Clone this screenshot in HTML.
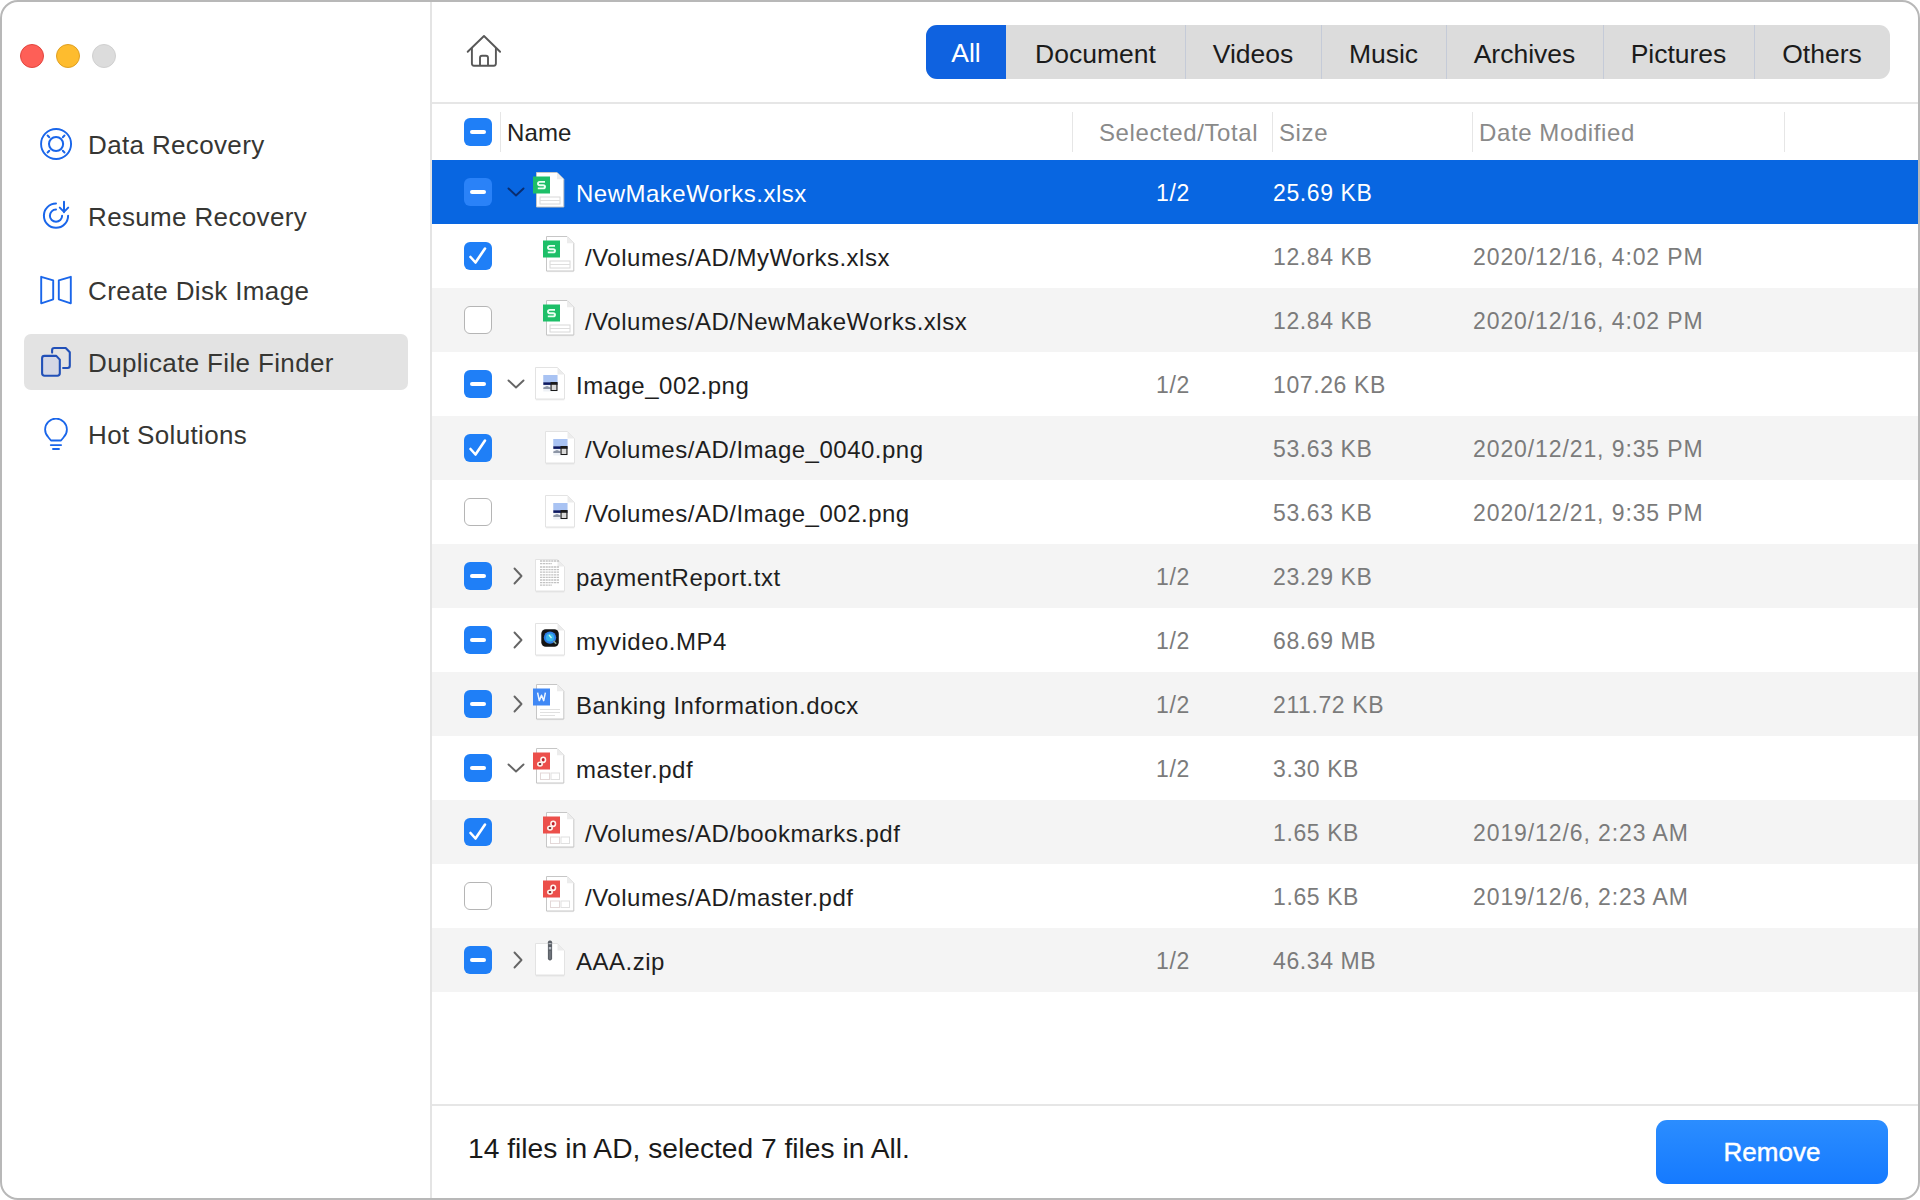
<!DOCTYPE html><html><head><meta charset="utf-8"><style>
*{box-sizing:border-box;margin:0;padding:0}
html,body{width:1920px;height:1200px;overflow:hidden;background:#fff;font-family:"Liberation Sans",sans-serif}
.win{position:absolute;left:0;top:0;width:1920px;height:1200px;border-radius:18px;overflow:hidden;background:#fff}
.frame{position:absolute;left:0;top:0;width:1920px;height:1200px;border:2px solid #b8b8b8;border-radius:18px;pointer-events:none}
.abs{position:absolute}
.tl{position:absolute;width:24px;height:24px;border-radius:50%;top:44px}
.side{position:absolute;left:0;top:0;width:432px;height:1200px;border-right:2px solid #e4e4e4}
.nav{position:absolute;left:24px;width:384px;height:56px;border-radius:7px}
.nav.sel{background:#e3e3e3}
.nav svg{position:absolute;left:14px;top:12px}
.nav span{position:absolute;left:64px;top:1px;line-height:56px;font-size:26px;letter-spacing:0.35px;color:#363633;white-space:nowrap}
.seg{position:absolute;left:926px;top:25px;width:964px;height:54px;border-radius:11px;background:#dcdcdc;overflow:hidden}
.sg{position:absolute;top:1.5px;height:54px;line-height:54px;text-align:center;font-size:26.5px;color:#1b1b1b;white-space:nowrap}
.sg.on{background:#0f62e0;color:#fff;top:0;line-height:57px}
.sd{position:absolute;top:0;width:1px;height:54px;background:#c5cbd8}
.hline{position:absolute;left:432px;width:1486px;height:2px;background:#e6e6e6}
.hdr{position:absolute;top:104px;height:56px;line-height:58px;font-size:24px;letter-spacing:0.6px;color:#8a8a8a;white-space:nowrap}
.cdiv{position:absolute;top:112px;width:1px;height:40px;background:#e6e6e6}
.row{position:absolute;left:432px;width:1486px;height:64px}
.row.g{background:#f4f4f4}
.row.s{background:#0866e1}
.t{position:absolute;top:0;line-height:67.5px;font-size:24px;letter-spacing:0.5px;white-space:nowrap;color:#1e1e1e}
.num{position:absolute;top:0;line-height:67.5px;font-size:23px;letter-spacing:0.6px;white-space:nowrap;color:#7b7b7b}
.cb{position:absolute;left:32px;top:18px;width:28px;height:28px;border-radius:6px;background:#1f7ff7}
.cb.e{background:#fff;border:1.5px solid #b5b5b5}
.cb.minus::after{content:"";position:absolute;left:6px;top:12px;width:16px;height:4px;border-radius:2px;background:#fff}
.row.s .cb{background:#2a82f8}
.foot{position:absolute;left:468px;top:1128px;line-height:40px;font-size:28.2px;color:#1a1a1a;white-space:nowrap}
.btn{position:absolute;left:1656px;top:1120px;width:232px;height:64px;border-radius:11px;background:linear-gradient(#2b8dff,#157aff);color:#fff;font-size:26px;text-align:center;line-height:64px;-webkit-text-stroke:0.45px #fff}
</style></head><body><div class="win">
<div class="side">
<div class="tl" style="left:20px;background:#fe5f57;border:0.5px solid #e2463f"></div><div class="tl" style="left:56px;background:#febc2e;border:0.5px solid #dfa023"></div><div class="tl" style="left:92px;background:#dcdcdc;border:0.5px solid #d0d0d0"></div>
<div class="nav" style="top:116px"><svg width="36" height="36" viewBox="0 0 36 36"><circle cx="18.07" cy="16" r="15" fill="none" stroke="#1a66ea" stroke-width="1.9"/><circle cx="18.07" cy="16" r="7.07" fill="none" stroke="#1a66ea" stroke-width="2"/><path d="M9.6 7.5 L11.3 9.2 M26.5 7.5 L24.8 9.2 M9.6 24.5 L11.3 22.8 M26.5 24.5 L24.8 22.8" stroke="#1a66ea" stroke-width="2" stroke-linecap="round"/></svg><span>Data Recovery</span></div>
<div class="nav" style="top:188px"><svg width="36" height="36" viewBox="0 0 36 36"><path d="M18 3.6 A12.1 12.1 0 1 0 30.1 15.7" fill="none" stroke="#1a66ea" stroke-width="2" stroke-linecap="round"/><path d="M18 9.6 A6.1 6.1 0 1 0 24.1 15.7" fill="none" stroke="#1a66ea" stroke-width="2" stroke-linecap="round"/><path d="M26 1.7 V12.2 M21.8 7.6 L26 11.9 L30.2 7.6" fill="none" stroke="#1a66ea" stroke-width="2" stroke-linecap="round" stroke-linejoin="round"/></svg><span>Resume Recovery</span></div>
<div class="nav" style="top:262px"><svg width="36" height="36" viewBox="0 0 36 36"><path d="M3.2 2.8 L15.2 6.3 V25.3 L3.2 29.3 Z" fill="none" stroke="#1a66ea" stroke-width="1.9" stroke-linejoin="round"/><path d="M32.8 2.8 L20.8 6.3 V25.3 L32.8 29.3 Z" fill="none" stroke="#1a66ea" stroke-width="1.9" stroke-linejoin="round"/></svg><span>Create Disk Image</span></div>
<div class="nav sel" style="top:334px"><svg width="36" height="36" viewBox="0 0 36 36"><path d="M14.1 6.6 V4.2 Q14.1 2 16.3 2 H27.7 L31.8 6.3 V19.8 Q31.8 22 29.6 22 H25.1" fill="none" stroke="#2150b8" stroke-width="2.1" stroke-linejoin="round" stroke-linecap="round"/><path d="M4.1 12.3 Q4.1 9.9 6.5 9.9 H18.3 L21.8 13.6 V27.3 Q21.8 29.7 19.4 29.7 H6.5 Q4.1 29.7 4.1 27.3 Z" fill="#d4d7e5" stroke="#2150b8" stroke-width="2.1" stroke-linejoin="round"/></svg><span>Duplicate File Finder</span></div>
<div class="nav" style="top:406px"><svg width="36" height="36" viewBox="0 0 36 36"><path d="M10.3 19.2 A10.9 10.9 0 1 1 25.7 19.2 L23 22.5 H13 Z" fill="none" stroke="#1a66ea" stroke-width="1.8" stroke-linejoin="round"/><path d="M12.8 27.1 H23.1 M15 31 H21" stroke="#1a66ea" stroke-width="1.9" stroke-linecap="round"/></svg><span>Hot Solutions</span></div>
</div>
<svg class="abs" style="left:462px;top:30px" width="44" height="44" viewBox="0 0 44 44"><path d="M5.7 21.8 L22 6 L38.1 21.8" fill="none" stroke="#585858" stroke-width="1.9" stroke-linecap="round" stroke-linejoin="round"/><path d="M9.9 18 V33.6 Q9.9 35.75 12 35.75 H31.8 Q33.9 35.75 33.9 33.6 V18" fill="none" stroke="#585858" stroke-width="1.9" stroke-linejoin="round"/><path d="M18 35.75 V27.8 Q18 25.7 20 25.7 H24 Q26 25.7 26 27.8 V35.75" fill="none" stroke="#585858" stroke-width="1.9"/></svg>
<div class="seg">
<div class="sg on" style="left:0px;width:80px">All</div>
<div class="sg" style="left:80px;width:179px">Document</div>
<div class="sg" style="left:259px;width:136px">Videos</div>
<div class="sd" style="left:259px"></div>
<div class="sg" style="left:395px;width:125px">Music</div>
<div class="sd" style="left:395px"></div>
<div class="sg" style="left:520px;width:157px">Archives</div>
<div class="sd" style="left:520px"></div>
<div class="sg" style="left:677px;width:151px">Pictures</div>
<div class="sd" style="left:677px"></div>
<div class="sg" style="left:828px;width:136px">Others</div>
<div class="sd" style="left:828px"></div>
</div>
<div class="hline" style="top:102px"></div>
<div class="cb minus" style="left:464px;top:118px"></div>
<div class="cdiv" style="left:500px"></div><div class="cdiv" style="left:1072px"></div><div class="cdiv" style="left:1272px"></div><div class="cdiv" style="left:1472px"></div><div class="cdiv" style="left:1784px"></div>
<div class="hdr" style="left:507px;color:#222;letter-spacing:0.1px">Name</div><div class="hdr" style="left:1099px">Selected/Total</div><div class="hdr" style="left:1279px">Size</div><div class="hdr" style="left:1479px">Date Modified</div>
<div class="row s" style="top:160px"><div class="cb minus"></div><svg class="abs" style="left:74px;top:24px" width="20" height="16" viewBox="0 0 20 16"><path d="M2.5 4.5 L10 11.5 L17.5 4.5" fill="none" stroke="#0a2c6e" stroke-width="1.9" stroke-linecap="round" stroke-linejoin="round"/></svg><svg class="abs" style="left:101px;top:12px" width="40" height="44" viewBox="0 0 40 44" overflow="visible"><rect x="3.6" y="35" width="27" height="1.2" fill="#000" opacity="0.06"/><path d="M3.5 0.5 H24 L30.8 7.3 V35 H3.5 Z" fill="#fff" stroke="#c6c6c6" stroke-width="1"/><path d="M24 0.5 L30.8 7.3 H24 Z" fill="#ececec"/><rect x="7" y="25" width="20" height="7" fill="none" stroke="#d8d8d8" stroke-width="1"/><line x1="7" y1="28.5" x2="27" y2="28.5" stroke="#dedede"/><rect x="0" y="4.5" width="17" height="17" fill="#1dbf68"/><path d="M12 9.9 H6.8 Q5 9.9 5 11.55 Q5 13.2 6.8 13.2 H10.2 Q12 13.2 12 14.8 Q12 16.4 10.2 16.4 H4.8" fill="none" stroke="#eafff2" stroke-width="1.9"/></svg><div class="t" style="left:144px;color:#fff">NewMakeWorks.xlsx</div><div class="num" style="left:641px;width:200px;text-align:center;color:#fff">1/2</div><div class="num" style="left:841px;color:#fff">25.69 KB</div></div>
<div class="row" style="top:224px"><div class="cb"><svg class="abs" style="left:0;top:0" width="28" height="28" viewBox="0 0 28 28"><path d="M6.5 15 L11.5 20.5 L21 6.5" fill="none" stroke="#fff" stroke-width="2.6" stroke-linecap="round" stroke-linejoin="round"/></svg></div><svg class="abs" style="left:111px;top:12px" width="40" height="44" viewBox="0 0 40 44" overflow="visible"><rect x="3.6" y="35" width="27" height="1.2" fill="#000" opacity="0.06"/><path d="M3.5 0.5 H24 L30.8 7.3 V35 H3.5 Z" fill="#fff" stroke="#c6c6c6" stroke-width="1"/><path d="M24 0.5 L30.8 7.3 H24 Z" fill="#ececec"/><rect x="7" y="25" width="20" height="7" fill="none" stroke="#d8d8d8" stroke-width="1"/><line x1="7" y1="28.5" x2="27" y2="28.5" stroke="#dedede"/><rect x="0" y="4.5" width="17" height="17" fill="#1dbf68"/><path d="M12 9.9 H6.8 Q5 9.9 5 11.55 Q5 13.2 6.8 13.2 H10.2 Q12 13.2 12 14.8 Q12 16.4 10.2 16.4 H4.8" fill="none" stroke="#eafff2" stroke-width="1.9"/></svg><div class="t" style="left:153px;color:#1e1e1e">/Volumes/AD/MyWorks.xlsx</div><div class="num" style="left:841px;color:#7b7b7b">12.84 KB</div><div class="num" style="left:1041px;color:#7b7b7b;letter-spacing:0.9px">2020/12/16, 4:02 PM</div></div>
<div class="row g" style="top:288px"><div class="cb e"></div><svg class="abs" style="left:111px;top:12px" width="40" height="44" viewBox="0 0 40 44" overflow="visible"><rect x="3.6" y="35" width="27" height="1.2" fill="#000" opacity="0.06"/><path d="M3.5 0.5 H24 L30.8 7.3 V35 H3.5 Z" fill="#fff" stroke="#c6c6c6" stroke-width="1"/><path d="M24 0.5 L30.8 7.3 H24 Z" fill="#ececec"/><rect x="7" y="25" width="20" height="7" fill="none" stroke="#d8d8d8" stroke-width="1"/><line x1="7" y1="28.5" x2="27" y2="28.5" stroke="#dedede"/><rect x="0" y="4.5" width="17" height="17" fill="#1dbf68"/><path d="M12 9.9 H6.8 Q5 9.9 5 11.55 Q5 13.2 6.8 13.2 H10.2 Q12 13.2 12 14.8 Q12 16.4 10.2 16.4 H4.8" fill="none" stroke="#eafff2" stroke-width="1.9"/></svg><div class="t" style="left:153px;color:#1e1e1e">/Volumes/AD/NewMakeWorks.xlsx</div><div class="num" style="left:841px;color:#7b7b7b">12.84 KB</div><div class="num" style="left:1041px;color:#7b7b7b;letter-spacing:0.9px">2020/12/16, 4:02 PM</div></div>
<div class="row" style="top:352px"><div class="cb minus"></div><svg class="abs" style="left:74px;top:24px" width="20" height="16" viewBox="0 0 20 16"><path d="M2.5 4.5 L10 11.5 L17.5 4.5" fill="none" stroke="#656565" stroke-width="1.9" stroke-linecap="round" stroke-linejoin="round"/></svg><svg class="abs" style="left:101px;top:12px" width="40" height="44" viewBox="0 0 40 44" overflow="visible"><rect x="2.8" y="35" width="28.5" height="1.4" fill="#000" opacity="0.07"/><path d="M2.5 3.5 H24.5 L31.5 10.5 V35 H2.5 Z" fill="#fff" stroke="#e3e3e3" stroke-width="1"/><path d="M24.5 3.5 V10.5 H31.5 Z" fill="#ececec"/><rect x="10.3" y="11" width="14.2" height="16.5" fill="#eef1f6"/><rect x="10.3" y="11" width="14.2" height="7.5" fill="#a9c3f3"/><rect x="10.3" y="18.3" width="14.2" height="2.6" fill="#0d1a62"/><path d="M10.3 23.5 L14 22 L17.5 23.5 V25 H10.3 Z" fill="#8d96a6"/><rect x="17.5" y="18" width="7" height="9" fill="#1a1a1a"/><rect x="18.6" y="20.8" width="4.8" height="5.2" fill="#d9d9d9"/></svg><div class="t" style="left:144px;color:#1e1e1e">Image_002.png</div><div class="num" style="left:641px;width:200px;text-align:center;color:#7b7b7b">1/2</div><div class="num" style="left:841px;color:#7b7b7b">107.26 KB</div></div>
<div class="row g" style="top:416px"><div class="cb"><svg class="abs" style="left:0;top:0" width="28" height="28" viewBox="0 0 28 28"><path d="M6.5 15 L11.5 20.5 L21 6.5" fill="none" stroke="#fff" stroke-width="2.6" stroke-linecap="round" stroke-linejoin="round"/></svg></div><svg class="abs" style="left:111px;top:12px" width="40" height="44" viewBox="0 0 40 44" overflow="visible"><rect x="2.8" y="35" width="28.5" height="1.4" fill="#000" opacity="0.07"/><path d="M2.5 3.5 H24.5 L31.5 10.5 V35 H2.5 Z" fill="#fff" stroke="#e3e3e3" stroke-width="1"/><path d="M24.5 3.5 V10.5 H31.5 Z" fill="#ececec"/><rect x="10.3" y="11" width="14.2" height="16.5" fill="#eef1f6"/><rect x="10.3" y="11" width="14.2" height="7.5" fill="#a9c3f3"/><rect x="10.3" y="18.3" width="14.2" height="2.6" fill="#0d1a62"/><path d="M10.3 23.5 L14 22 L17.5 23.5 V25 H10.3 Z" fill="#8d96a6"/><rect x="17.5" y="18" width="7" height="9" fill="#1a1a1a"/><rect x="18.6" y="20.8" width="4.8" height="5.2" fill="#d9d9d9"/></svg><div class="t" style="left:153px;color:#1e1e1e">/Volumes/AD/Image_0040.png</div><div class="num" style="left:841px;color:#7b7b7b">53.63 KB</div><div class="num" style="left:1041px;color:#7b7b7b;letter-spacing:0.9px">2020/12/21, 9:35 PM</div></div>
<div class="row" style="top:480px"><div class="cb e"></div><svg class="abs" style="left:111px;top:12px" width="40" height="44" viewBox="0 0 40 44" overflow="visible"><rect x="2.8" y="35" width="28.5" height="1.4" fill="#000" opacity="0.07"/><path d="M2.5 3.5 H24.5 L31.5 10.5 V35 H2.5 Z" fill="#fff" stroke="#e3e3e3" stroke-width="1"/><path d="M24.5 3.5 V10.5 H31.5 Z" fill="#ececec"/><rect x="10.3" y="11" width="14.2" height="16.5" fill="#eef1f6"/><rect x="10.3" y="11" width="14.2" height="7.5" fill="#a9c3f3"/><rect x="10.3" y="18.3" width="14.2" height="2.6" fill="#0d1a62"/><path d="M10.3 23.5 L14 22 L17.5 23.5 V25 H10.3 Z" fill="#8d96a6"/><rect x="17.5" y="18" width="7" height="9" fill="#1a1a1a"/><rect x="18.6" y="20.8" width="4.8" height="5.2" fill="#d9d9d9"/></svg><div class="t" style="left:153px;color:#1e1e1e">/Volumes/AD/Image_002.png</div><div class="num" style="left:841px;color:#7b7b7b">53.63 KB</div><div class="num" style="left:1041px;color:#7b7b7b;letter-spacing:0.9px">2020/12/21, 9:35 PM</div></div>
<div class="row g" style="top:544px"><div class="cb minus"></div><svg class="abs" style="left:78px;top:22px" width="16" height="20" viewBox="0 0 16 20"><path d="M4.5 2.5 L11.5 10 L4.5 17.5" fill="none" stroke="#656565" stroke-width="1.9" stroke-linecap="round" stroke-linejoin="round"/></svg><svg class="abs" style="left:101px;top:12px" width="40" height="44" viewBox="0 0 40 44" overflow="visible"><rect x="2.8" y="35" width="28.5" height="1.4" fill="#000" opacity="0.07"/><path d="M2.5 3.5 H24.5 L31.5 10.5 V35 H2.5 Z" fill="#fff" stroke="#e3e3e3" stroke-width="1"/><path d="M24.5 3.5 V10.5 H31.5 Z" fill="#ececec"/><line x1="7" y1="5" x2="26.6" y2="5" stroke="#c2c2c2" stroke-width="1.3" stroke-dasharray="2.2 0.6"/><line x1="7" y1="7.6" x2="19" y2="7.6" stroke="#c2c2c2" stroke-width="1.3" stroke-dasharray="2.2 0.6"/><line x1="7" y1="11" x2="26.6" y2="11" stroke="#c2c2c2" stroke-width="1.3" stroke-dasharray="2.2 0.6"/><line x1="7" y1="13.6" x2="26.6" y2="13.6" stroke="#c2c2c2" stroke-width="1.3" stroke-dasharray="2.2 0.6"/><line x1="7" y1="16.2" x2="26.6" y2="16.2" stroke="#c2c2c2" stroke-width="1.3" stroke-dasharray="2.2 0.6"/><line x1="7" y1="18.8" x2="26.6" y2="18.8" stroke="#c2c2c2" stroke-width="1.3" stroke-dasharray="2.2 0.6"/><line x1="7" y1="21.4" x2="26.6" y2="21.4" stroke="#c2c2c2" stroke-width="1.3" stroke-dasharray="2.2 0.6"/><line x1="7" y1="24" x2="26.6" y2="24" stroke="#c2c2c2" stroke-width="1.3" stroke-dasharray="2.2 0.6"/><line x1="7" y1="26.6" x2="26.6" y2="26.6" stroke="#c2c2c2" stroke-width="1.3" stroke-dasharray="2.2 0.6"/><line x1="7" y1="29.2" x2="19" y2="29.2" stroke="#c2c2c2" stroke-width="1.3" stroke-dasharray="2.2 0.6"/></svg><div class="t" style="left:144px;color:#1e1e1e">paymentReport.txt</div><div class="num" style="left:641px;width:200px;text-align:center;color:#7b7b7b">1/2</div><div class="num" style="left:841px;color:#7b7b7b">23.29 KB</div></div>
<div class="row" style="top:608px"><div class="cb minus"></div><svg class="abs" style="left:78px;top:22px" width="16" height="20" viewBox="0 0 16 20"><path d="M4.5 2.5 L11.5 10 L4.5 17.5" fill="none" stroke="#656565" stroke-width="1.9" stroke-linecap="round" stroke-linejoin="round"/></svg><svg class="abs" style="left:101px;top:12px" width="40" height="44" viewBox="0 0 40 44" overflow="visible"><rect x="2.8" y="35" width="28.5" height="1.4" fill="#000" opacity="0.07"/><path d="M2.5 3.5 H24.5 L31.5 10.5 V35 H2.5 Z" fill="#fff" stroke="#e3e3e3" stroke-width="1"/><path d="M24.5 3.5 V10.5 H31.5 Z" fill="#ececec"/><rect x="8.3" y="9.2" width="17.5" height="17.5" rx="4.5" fill="#141414"/><circle cx="17" cy="17.6" r="6.2" fill="#2f7fe6"/><circle cx="17" cy="17.6" r="4" fill="#38b6ea"/><path d="M16 15 L18.5 18" stroke="#cfe" stroke-width="1.3"/><path d="M20.5 21 L23.2 23.7" stroke="#8a9" stroke-width="1.6"/></svg><div class="t" style="left:144px;color:#1e1e1e">myvideo.MP4</div><div class="num" style="left:641px;width:200px;text-align:center;color:#7b7b7b">1/2</div><div class="num" style="left:841px;color:#7b7b7b">68.69 MB</div></div>
<div class="row g" style="top:672px"><div class="cb minus"></div><svg class="abs" style="left:78px;top:22px" width="16" height="20" viewBox="0 0 16 20"><path d="M4.5 2.5 L11.5 10 L4.5 17.5" fill="none" stroke="#656565" stroke-width="1.9" stroke-linecap="round" stroke-linejoin="round"/></svg><svg class="abs" style="left:101px;top:12px" width="40" height="44" viewBox="0 0 40 44" overflow="visible"><rect x="3.6" y="35" width="27" height="1.2" fill="#000" opacity="0.06"/><path d="M3.5 0.5 H24 L30.8 7.3 V35 H3.5 Z" fill="#fff" stroke="#c6c6c6" stroke-width="1"/><path d="M24 0.5 L30.8 7.3 H24 Z" fill="#ececec"/><line x1="7" y1="25.5" x2="27" y2="25.5" stroke="#e0e0e0"/><line x1="7" y1="28.5" x2="27" y2="28.5" stroke="#e0e0e0"/><line x1="7" y1="31.5" x2="22" y2="31.5" stroke="#e0e0e0"/><rect x="0" y="4.5" width="17" height="17" fill="#4088f5"/><path d="M4.6 8.6 L6.3 16.6 L8.5 11.3 L10.7 16.6 L12.4 8.6" fill="none" stroke="#eef6ff" stroke-width="1.5" stroke-linejoin="round"/></svg><div class="t" style="left:144px;color:#1e1e1e">Banking Information.docx</div><div class="num" style="left:641px;width:200px;text-align:center;color:#7b7b7b">1/2</div><div class="num" style="left:841px;color:#7b7b7b">211.72 KB</div></div>
<div class="row" style="top:736px"><div class="cb minus"></div><svg class="abs" style="left:74px;top:24px" width="20" height="16" viewBox="0 0 20 16"><path d="M2.5 4.5 L10 11.5 L17.5 4.5" fill="none" stroke="#656565" stroke-width="1.9" stroke-linecap="round" stroke-linejoin="round"/></svg><svg class="abs" style="left:101px;top:12px" width="40" height="44" viewBox="0 0 40 44" overflow="visible"><rect x="3.6" y="35" width="27" height="1.2" fill="#000" opacity="0.06"/><path d="M3.5 0.5 H24 L30.8 7.3 V35 H3.5 Z" fill="#fff" stroke="#c6c6c6" stroke-width="1"/><path d="M24 0.5 L30.8 7.3 H24 Z" fill="#ececec"/><rect x="7.5" y="25" width="9" height="6.5" fill="none" stroke="#e3d8d8"/><rect x="18" y="25" width="8.5" height="6.5" fill="none" stroke="#e0e0e0"/><rect x="0" y="4.5" width="17" height="17" fill="#ec4f4a"/><ellipse cx="10.2" cy="11.8" rx="2.3" ry="2.6" fill="#c0202a" stroke="#fff4ee" stroke-width="1.6"/><ellipse cx="7" cy="16.1" rx="2.2" ry="1.9" fill="#6a3030" stroke="#fff4ee" stroke-width="1.6"/></svg><div class="t" style="left:144px;color:#1e1e1e">master.pdf</div><div class="num" style="left:641px;width:200px;text-align:center;color:#7b7b7b">1/2</div><div class="num" style="left:841px;color:#7b7b7b">3.30 KB</div></div>
<div class="row g" style="top:800px"><div class="cb"><svg class="abs" style="left:0;top:0" width="28" height="28" viewBox="0 0 28 28"><path d="M6.5 15 L11.5 20.5 L21 6.5" fill="none" stroke="#fff" stroke-width="2.6" stroke-linecap="round" stroke-linejoin="round"/></svg></div><svg class="abs" style="left:111px;top:12px" width="40" height="44" viewBox="0 0 40 44" overflow="visible"><rect x="3.6" y="35" width="27" height="1.2" fill="#000" opacity="0.06"/><path d="M3.5 0.5 H24 L30.8 7.3 V35 H3.5 Z" fill="#fff" stroke="#c6c6c6" stroke-width="1"/><path d="M24 0.5 L30.8 7.3 H24 Z" fill="#ececec"/><rect x="7.5" y="25" width="9" height="6.5" fill="none" stroke="#e3d8d8"/><rect x="18" y="25" width="8.5" height="6.5" fill="none" stroke="#e0e0e0"/><rect x="0" y="4.5" width="17" height="17" fill="#ec4f4a"/><ellipse cx="10.2" cy="11.8" rx="2.3" ry="2.6" fill="#c0202a" stroke="#fff4ee" stroke-width="1.6"/><ellipse cx="7" cy="16.1" rx="2.2" ry="1.9" fill="#6a3030" stroke="#fff4ee" stroke-width="1.6"/></svg><div class="t" style="left:153px;color:#1e1e1e">/Volumes/AD/bookmarks.pdf</div><div class="num" style="left:841px;color:#7b7b7b">1.65 KB</div><div class="num" style="left:1041px;color:#7b7b7b;letter-spacing:0.9px">2019/12/6, 2:23 AM</div></div>
<div class="row" style="top:864px"><div class="cb e"></div><svg class="abs" style="left:111px;top:12px" width="40" height="44" viewBox="0 0 40 44" overflow="visible"><rect x="3.6" y="35" width="27" height="1.2" fill="#000" opacity="0.06"/><path d="M3.5 0.5 H24 L30.8 7.3 V35 H3.5 Z" fill="#fff" stroke="#c6c6c6" stroke-width="1"/><path d="M24 0.5 L30.8 7.3 H24 Z" fill="#ececec"/><rect x="7.5" y="25" width="9" height="6.5" fill="none" stroke="#e3d8d8"/><rect x="18" y="25" width="8.5" height="6.5" fill="none" stroke="#e0e0e0"/><rect x="0" y="4.5" width="17" height="17" fill="#ec4f4a"/><ellipse cx="10.2" cy="11.8" rx="2.3" ry="2.6" fill="#c0202a" stroke="#fff4ee" stroke-width="1.6"/><ellipse cx="7" cy="16.1" rx="2.2" ry="1.9" fill="#6a3030" stroke="#fff4ee" stroke-width="1.6"/></svg><div class="t" style="left:153px;color:#1e1e1e">/Volumes/AD/master.pdf</div><div class="num" style="left:841px;color:#7b7b7b">1.65 KB</div><div class="num" style="left:1041px;color:#7b7b7b;letter-spacing:0.9px">2019/12/6, 2:23 AM</div></div>
<div class="row g" style="top:928px"><div class="cb minus"></div><svg class="abs" style="left:78px;top:22px" width="16" height="20" viewBox="0 0 16 20"><path d="M4.5 2.5 L11.5 10 L4.5 17.5" fill="none" stroke="#656565" stroke-width="1.9" stroke-linecap="round" stroke-linejoin="round"/></svg><svg class="abs" style="left:101px;top:12px" width="40" height="44" viewBox="0 0 40 44" overflow="visible"><rect x="2.8" y="35" width="28.5" height="1.4" fill="#000" opacity="0.07"/><path d="M2.5 3.5 H24.5 L31.5 10.5 V35 H2.5 Z" fill="#fff" stroke="#e3e3e3" stroke-width="1"/><path d="M24.5 3.5 V10.5 H31.5 Z" fill="#ececec"/><rect x="14.9" y="0.4" width="4.2" height="20" rx="1.8" fill="#5c6168"/><rect x="15.5" y="3.2" width="3" height="1" fill="#c8ccd2"/><rect x="15.8" y="7" width="2.4" height="2.4" fill="#b8bec6"/><line x1="17" y1="11" x2="17" y2="19" stroke="#8a9098" stroke-width="0.8"/></svg><div class="t" style="left:144px;color:#1e1e1e">AAA.zip</div><div class="num" style="left:641px;width:200px;text-align:center;color:#7b7b7b">1/2</div><div class="num" style="left:841px;color:#7b7b7b">46.34 MB</div></div>
<div class="hline" style="top:1104px"></div>
<div class="foot">14 files in AD, selected 7 files in All.</div>
<div class="btn">Remove</div>
</div><div class="frame"></div></body></html>
